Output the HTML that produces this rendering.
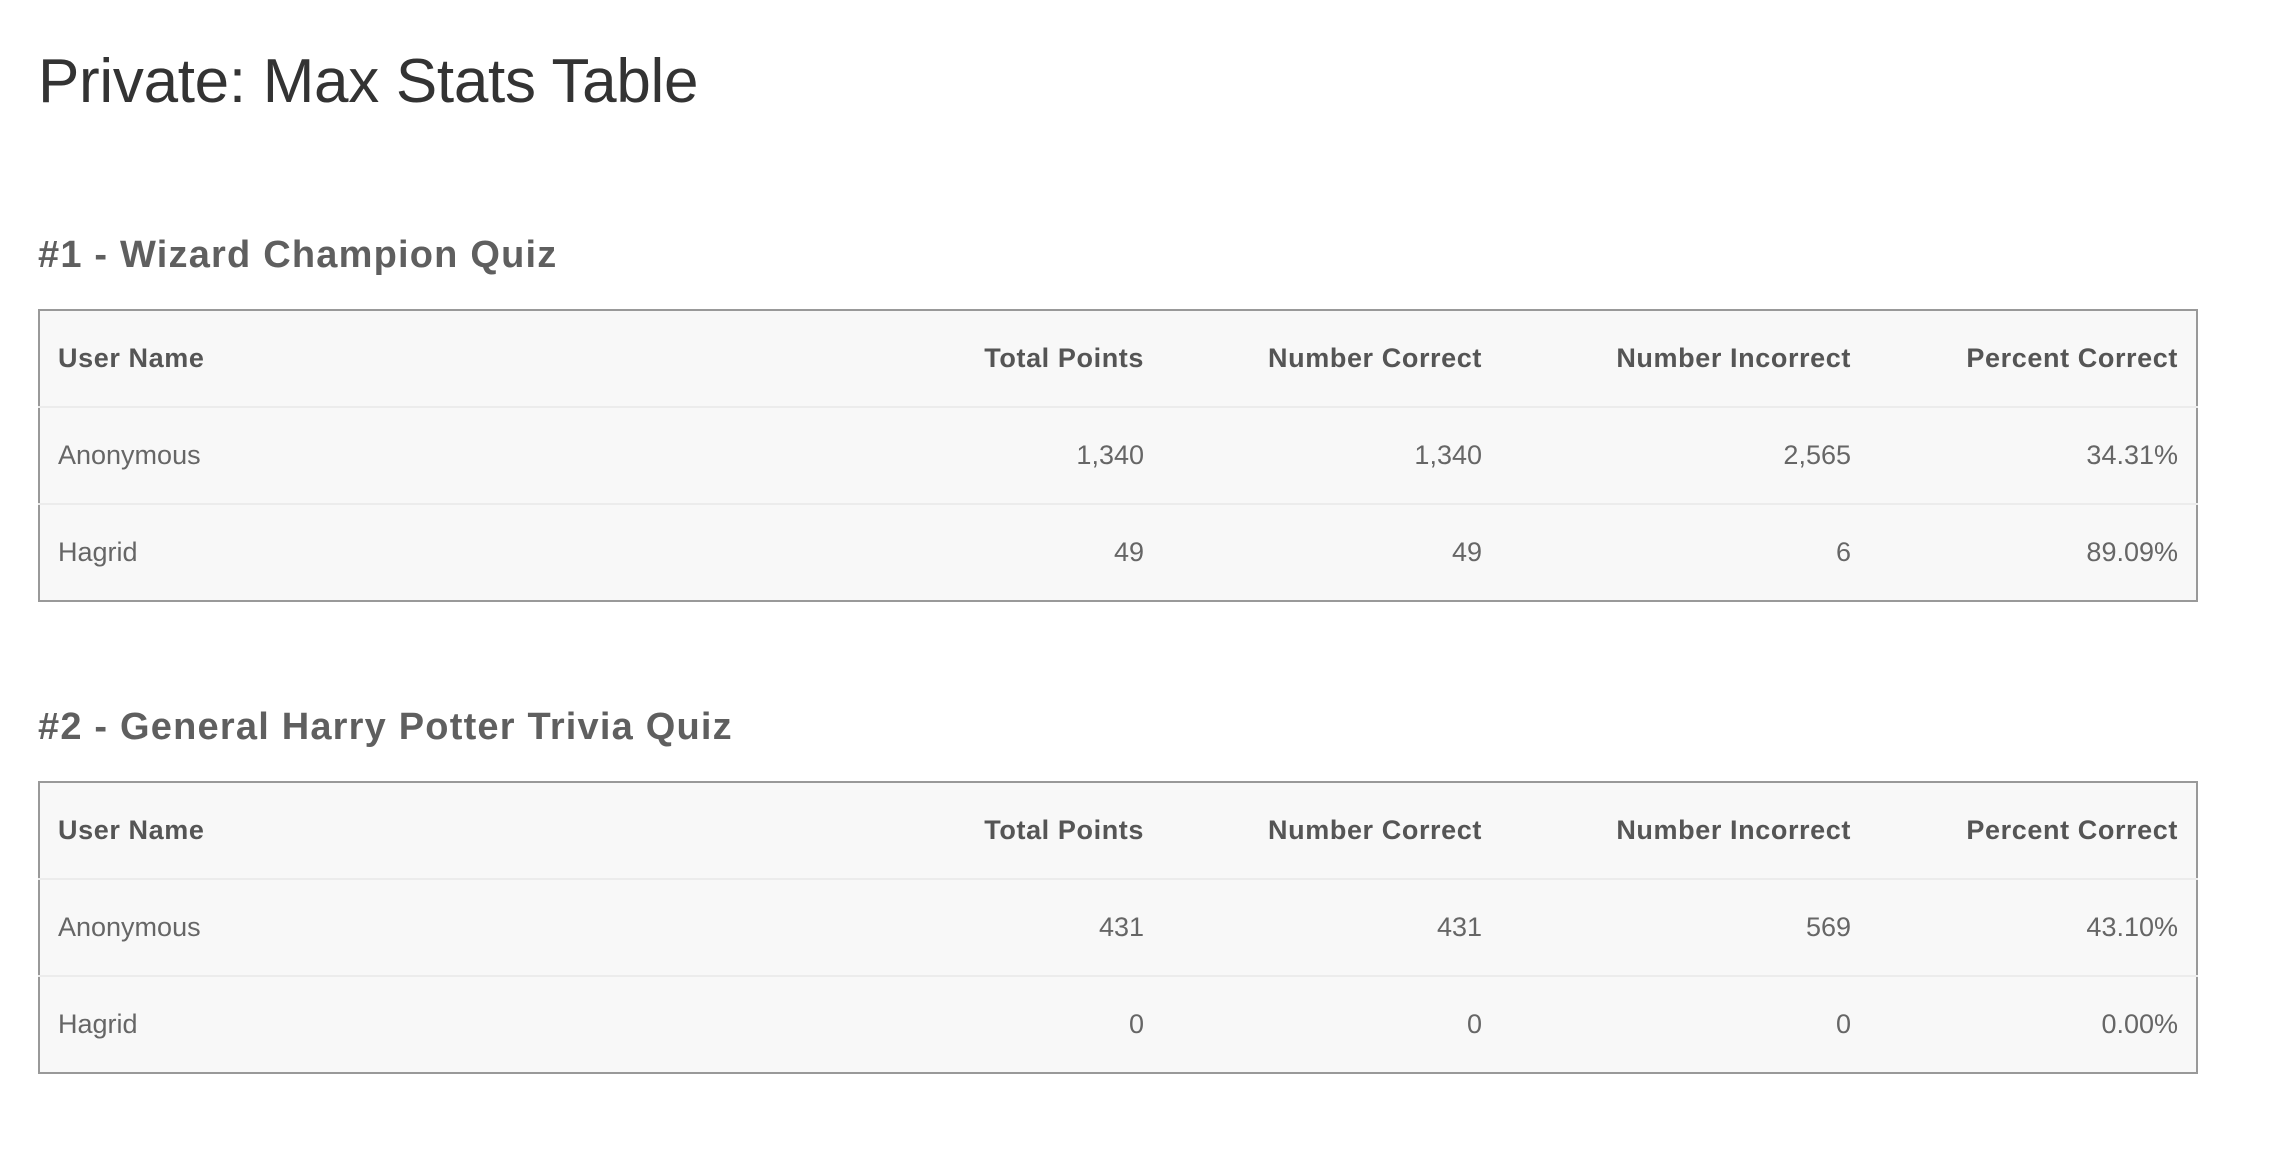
<!DOCTYPE html>
<html><head><meta charset="utf-8"><style>
html,body{margin:0;padding:0;background:#fff;width:2288px;height:1162px;overflow:hidden;font-family:"Liberation Sans",sans-serif;}
h1{position:absolute;left:38px;top:42px;margin:0;font-weight:normal;font-size:62px;line-height:80px;color:#333;letter-spacing:-0.3px;}
h2{position:absolute;left:38px;margin:0;font-size:38px;line-height:50px;color:#5f5f5f;font-weight:bold;letter-spacing:1.2px;}
table{position:absolute;left:38px;width:2158px;border-collapse:collapse;table-layout:fixed;background:#f8f8f8;border:2px solid #999;}
td,th{height:97px;padding:0 18px;font-size:27px;color:#666;text-align:right;border-top:2px solid #ececec;box-sizing:border-box;}
th{color:#555;font-weight:bold;border-top:none;letter-spacing:0.6px;}
td:first-child,th:first-child{text-align:left;}
</style></head><body>
<h1>Private: Max Stats Table</h1>
<h2 style="top:230px">#1 - Wizard Champion Quiz</h2>
<table style="top:309px">
<colgroup><col style="width:822px"><col style="width:301px"><col style="width:338px"><col style="width:369px"><col style="width:328px"></colgroup>
<tr><th>User Name</th><th>Total Points</th><th>Number Correct</th><th>Number Incorrect</th><th>Percent Correct</th></tr>
<tr><td>Anonymous</td><td>1,340</td><td>1,340</td><td>2,565</td><td>34.31%</td></tr>
<tr><td>Hagrid</td><td>49</td><td>49</td><td>6</td><td>89.09%</td></tr>
</table>
<h2 style="top:702px">#2 - General Harry Potter Trivia Quiz</h2>
<table style="top:781px">
<colgroup><col style="width:822px"><col style="width:301px"><col style="width:338px"><col style="width:369px"><col style="width:328px"></colgroup>
<tr><th>User Name</th><th>Total Points</th><th>Number Correct</th><th>Number Incorrect</th><th>Percent Correct</th></tr>
<tr><td>Anonymous</td><td>431</td><td>431</td><td>569</td><td>43.10%</td></tr>
<tr><td>Hagrid</td><td>0</td><td>0</td><td>0</td><td>0.00%</td></tr>
</table>
</body></html>
